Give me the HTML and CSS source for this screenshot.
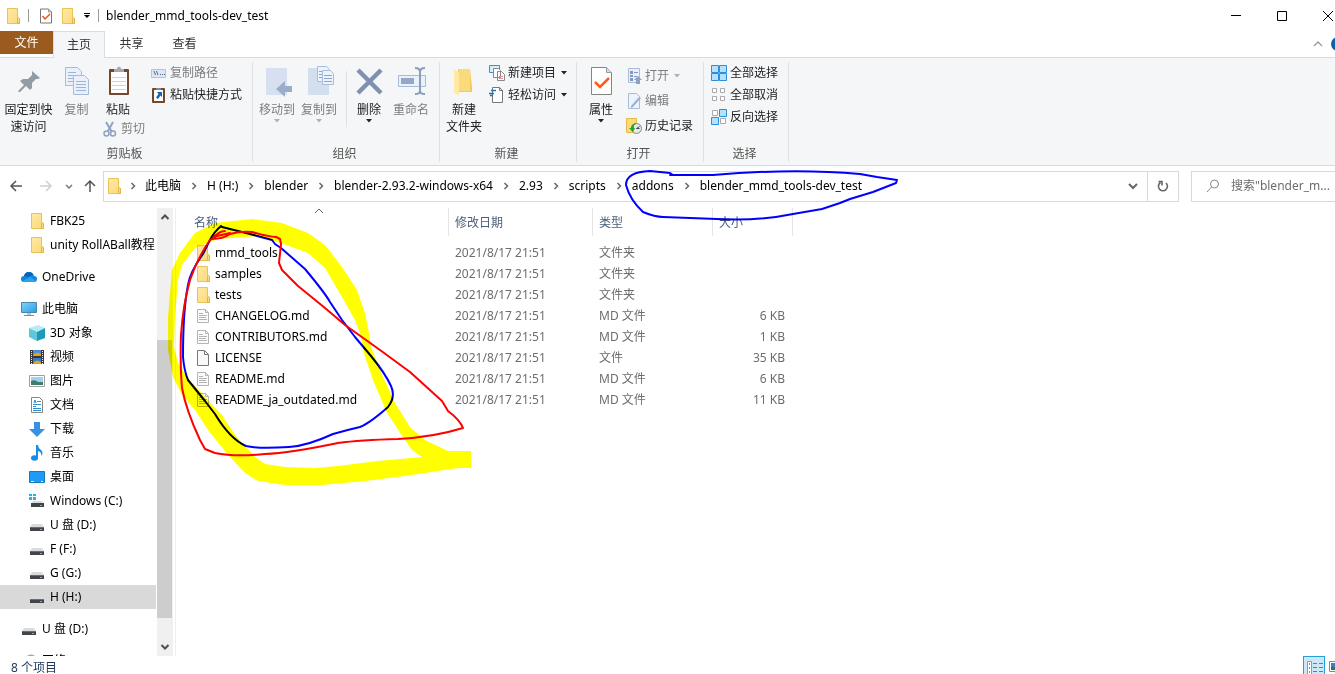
FILE: index.html
```html
<!DOCTYPE html>
<html lang="zh-CN">
<head>
<meta charset="utf-8">
<title>blender_mmd_tools-dev_test</title>
<link rel="stylesheet" href="styles.css">
</head>
<body>
<svg class="defs" aria-hidden="true">
  <defs>
    <linearGradient id="gf" x1="0" y1="0" x2="1" y2="1"><stop offset="0" stop-color="#ffe9a6"/><stop offset="1" stop-color="#fbd978"/></linearGradient>
    <linearGradient id="gs" x1="0" y1="0" x2="1" y2="1"><stop offset="0" stop-color="#7fd4f8"/><stop offset="1" stop-color="#2d9be8"/></linearGradient>
    <symbol id="folder" viewBox="0 0 14 16"><path d="M1.500.5h10v9l2 1v5h-12z" fill="url(#gf)" stroke="#e8c35a"/><path d="M11.500 15.500v-5l1-1 1 1v5z" fill="#fbdc82" stroke="#dfb548"/></symbol>
    <symbol id="mdfile" viewBox="0 0 14 16"><path d="M1.500 1.500h8l3 3v10h-11z" fill="#fbfbfb" stroke="#b4b4b4"/><path d="M9.500 1.500v3h3" fill="none" stroke="#b4b4b4"/><path d="M3 5.500h4M3 7.500h8M3 9.500h7M3 11.500h8" stroke="#b4b4b4"/></symbol>
    <symbol id="blank" viewBox="0 0 14 16"><path d="M1.500.5h7l4 4v11h-11z" fill="#f9f9f9" stroke="#777"/><path d="M8.500.5v4h4" fill="none" stroke="#777"/></symbol>
    <symbol id="drive" viewBox="0 0 16 16"><path d="M3 7h10l2 3H1z" fill="#d9dcde"/><path d="M1 10h14v4H1z" fill="#414549"/><path d="M1 10h14v1H1z" fill="#6a6e72"/><path d="M11 12h2v1h-2z" fill="#3dea45"/></symbol>
    <symbol id="chev" viewBox="0 0 8 8"><path d="M2.500 1l3 3-3 3" fill="none" stroke="#686868" stroke-width="1.500"/></symbol>
    <symbol id="tri" viewBox="0 0 6 4"><path d="M0 0h6L3 3.500z" fill="currentColor"/></symbol>
  </defs>
</svg>
<div class="window">
  <header class="titlebar">
    <svg class="i14"><use href="#folder"/></svg>
    <span class="bar"></span>
    <svg class="i14" viewBox="0 0 14 16"><path d="M1.500 1h8l3 3v11h-11z" fill="#fff" stroke="#777"/><path d="M9.500 1v3h3" fill="none" stroke="#999"/><path d="M3.500 8l2.500 3 5-5" fill="none" stroke="#f0501a" stroke-width="1.500"/></svg>
    <svg class="i14 second"><use href="#folder"/></svg>
    <svg class="qat" viewBox="0 0 8 6"><path d="M1 .5h6" stroke="#000"/><path d="M1 2h6L4 5z"/></svg>
    <span class="bar"></span>
    <h1>blender_mmd_tools-dev_test</h1>
    <div class="wincontrols">
      <button aria-label="最小化"><svg viewBox="0 0 10 10"><path d="M0 4.500h10" stroke="#000"/></svg></button>
      <button aria-label="最大化"><svg viewBox="0 0 10 10"><path d="M.5.5h9v9h-9z" fill="none" stroke="#000"/></svg></button>
      <button aria-label="关闭"><svg viewBox="0 0 10 10"><path d="M0 0l10 10M10 0L0 10" stroke="#000"/></svg></button>
    </div>
  </header>
  <nav class="tabs">
    <button class="file">文件</button><button class="active">主页</button><button>共享</button><button>查看</button>
    <svg class="fold" viewBox="0 0 18 14"><path d="M1 9l4-4 4 4" fill="none" stroke="#999" stroke-width="1.300"/></svg>
    <svg class="help" viewBox="0 0 4 14"><circle cx="7" cy="7" r="7" fill="#0a62ab"/></svg>
  </nav>
  <section class="ribbon">
    <div class="group clip">
      <div class="body">
        <button class="big pin"><svg viewBox="0 0 32 32"><path d="M19 5l8 7-2 1-2 0-4 4 0 5-2 2-4-4-6 6-2 0 1-2 5-5-4-4 3-2 5 0 4-4z" fill="#929ca5"/></svg>固定到快<br>速访问</button>
        <button class="big copy dim"><svg viewBox="0 0 32 32"><g fill="#eaf0fa" stroke="#a9bbd8"><path d="M4.500 1.500h12l4 4v14h-16z"/><path d="M12.500 9.500h11l4 4v15h-15z"/></g><path d="M7 6.500h8M7 9.500h5M7 12.500h5M7 15.500h5M15 15.500h10M15 18.500h10M15 21.500h10M15 24.500h10" stroke="#9cb4d8"/></svg>复制</button>
        <div class="stack">
          <button class="big"><svg viewBox="0 0 32 32"><rect x="7" y="3" width="20" height="26" rx="1" fill="#74492b"/><path d="M9 6h16v21H9z" fill="#fff"/><path d="M10 11.500h14M10 15.500h14M10 19.500h14M10 23.500h14" stroke="#b9dcef"/><path d="M12 6V3h3c0-3 4-3 4 0h3v3z" fill="#a5a9ad"/></svg>粘贴</button>
          <button class="small dim"><svg viewBox="0 0 16 16"><path d="M4 1l6 10M11 1L6 10" stroke="#8ea3c4" stroke-width="2"/><circle cx="4.500" cy="12.500" r="2.500" fill="none" stroke="#8ea3c4" stroke-width="1.500"/><circle cx="11" cy="12.500" r="2.500" fill="none" stroke="#8ea3c4" stroke-width="1.500"/></svg>剪切</button>
        </div>
        <div class="rows">
          <button class="small dim"><svg viewBox="0 0 16 16"><path d="M.5 4.500h14v8H.5z" fill="#dce6f4" stroke="#b5c3da"/><path d="M3 6l1.500 4M5.500 6L7 10M9 9.500h1M11 9.500h1M13 9.500h1" stroke="#56698c"/></svg>复制路径</button>
          <button class="small"><svg viewBox="0 0 16 16"><rect x="1" y="1" width="13" height="15" rx="1" fill="#74492b"/><path d="M3 3h9v11H3z" fill="#fff"/><path d="M5 3V1h5v2z" fill="#888"/><path d="M6 5h5v5L9.500 8.500 7 12 5 10.500 7.500 7z" fill="#1c64b0"/></svg>粘贴快捷方式</button>
        </div>
      </div>
      <div class="caption">剪贴板</div>
    </div>
    <div class="group org">
      <div class="body">
        <button class="big w42 dim"><svg viewBox="0 0 32 32"><path d="M5 2h21v27H5z" fill="#d6e0f0"/><path d="M31 20v6h-7v5l-9-8 9-8v5z" fill="#9cadcb"/></svg>移动到<svg class="drop"><use href="#tri"/></svg></button>
        <button class="big w42 dim"><svg viewBox="0 0 32 32"><path d="M5 2h21v27H5z" fill="#d3deef"/><g fill="#edf3fb" stroke="#aabcd9"><path d="M14.500.5h9l3 3v12h-12z"/><path d="M19.500 4.500h8l3 3v11h-11z"/></g><path d="M16 5.500h3M16 8.500h3M16 11.500h3M21 9.500h8M21 12.500h8M21 15.500h8" stroke="#8ca5cc"/></svg>复制到<svg class="drop"><use href="#tri"/></svg></button>
        <span class="rule"></span>
        <button class="big w42"><svg viewBox="0 0 32 32"><path d="M5 4l23 23M28 4L5 27" stroke="#7f90b0" stroke-width="4.500"/></svg>删除<svg class="drop"><use href="#tri"/></svg></button>
        <button class="big w42 dim"><svg viewBox="0 0 32 32"><path d="M3.500 9.500h27v11h-27z" fill="#e9f1fb" stroke="#a7bbd8"/><path d="M6 12h13v6H6z" fill="#94a7c6"/><path d="M20 2q5 0 5 4v19q0 3-5 3M30 2q-5 0-5 4M30 28q-5 0-5-3" fill="none" stroke="#8a9dbd" stroke-width="2"/></svg>重命名</button>
      </div>
      <div class="caption">组织</div>
    </div>
    <div class="group new">
      <div class="body">
        <button class="big w48"><svg viewBox="0 0 32 32"><path d="M10 3h12l2 18v5H10z" fill="#f4c95c"/><path d="M11 3h11v22H11z" fill="#fadb7b"/><path d="M6 3l5 4v23l-5-4z" fill="#ffe9a3"/></svg>新建<br>文件夹</button>
        <div class="rows">
          <button class="small"><svg viewBox="0 0 16 16"><path d="M.5.500h10v7H.5z" fill="#d7effa" stroke="#3e93b9"/><path d="M4.500 3.500h5l2 2v7h-7zM8.500 6.500h4l3 3v6h-7z" fill="#fff" stroke="#888"/><path d="M10 11.500h4M10 13.500h4" stroke="#d99"/></svg>新建项目<svg class="drop"><use href="#tri"/></svg></button>
          <button class="small"><svg viewBox="0 0 16 16"><path d="M3.500.500h7l3 3v12h-10z" fill="#fff" stroke="#777"/><path d="M10.500.500v3h3" fill="none" stroke="#777"/><path d="M2 3.500h5M0 6.500h5M1 8.500h3" stroke="#1779c2" stroke-width="1.500"/></svg>轻松访问<svg class="drop"><use href="#tri"/></svg></button>
        </div>
      </div>
      <div class="caption">新建</div>
    </div>
    <div class="group open">
      <div class="body">
        <button class="big w48"><svg viewBox="0 0 32 32"><path d="M6.500 1.500h15l5 5v22h-20z" fill="#fff" stroke="#858585"/><path d="M21.500 1.500v5h5" fill="#ddd" stroke="#999"/><path d="M10 16l5 5 9-9" fill="none" stroke="#ff5c14" stroke-width="2.500"/></svg>属性<svg class="drop"><use href="#tri"/></svg></button>
        <div class="rows tall">
          <button class="small dim"><svg viewBox="0 0 16 16"><path d="M2.500.500h11v14h-11z" fill="#e8eff9" stroke="#aabcd8"/><path d="M4 3h3v3H4zM4 7h3v2H4zM4 10h3v3H4z" fill="#8298bf"/><path d="M8 4.500h4M8 8.500h3" stroke="#8298bf"/><path d="M10 16v-4H8l4-4 4 4h-2v4z" fill="#8fa2c6"/></svg>打开<svg class="drop"><use href="#tri"/></svg></button>
          <button class="small dim"><svg viewBox="0 0 16 16"><path d="M2.500.500h8l3 3v12h-11z" fill="#edf3fb" stroke="#aabcd8"/><path d="M15 5l-8 9-2 1 0-2 8-9z" fill="#9cb0d2"/></svg>编辑</button>
          <button class="small"><svg viewBox="0 0 16 16"><path d="M.5.500h10v14H.5z" fill="#fbdc77" stroke="#e3b948"/><circle cx="10.500" cy="10.500" r="5" fill="#e5e7e8" stroke="#858b8e"/><path d="M10.500 10.500l3-2M10.500 10.500h3" fill="none" stroke="#444"/><path d="M10 5q-5 1-5 5H3l4 4 2-4H8q-1-3 2-4z" fill="#20a435"/></svg>历史记录</button>
        </div>
      </div>
      <div class="caption">打开</div>
    </div>
    <div class="group sel">
      <div class="body">
        <div class="rows">
          <button class="small"><svg viewBox="0 0 16 16"><path d="M.5.500h7v7h-7zM8.500.500h7v7h-7zM.5 8.500h7v7h-7zM8.500 8.500h7v7h-7z" fill="#b5e1ff" stroke="#2a8fdc"/></svg>全部选择</button>
          <button class="small"><svg viewBox="0 0 16 16"><path d="M1.500 1.500h4v4h-4zM9.500 1.500h4v4h-4zM1.500 9.500h4v4h-4zM9.500 9.500h4v4h-4z" fill="#fff" stroke="#aaa"/></svg>全部取消</button>
          <button class="small"><svg viewBox="0 0 16 16"><path d="M1.500 1.500h5v5h-5zM9.500 9.500h5v5h-5z" fill="#fff" stroke="#aaa"/><path d="M8.500.500h7v7h-7zM.5 8.500h7v7h-7z" fill="#b5e1ff" stroke="#2a8fdc"/></svg>反向选择</button>
        </div>
      </div>
      <div class="caption">选择</div>
    </div>
  </section>
  <div class="address">
    <div class="navbtns">
      <button aria-label="后退"><svg viewBox="0 0 14 14"><path d="M13 7H2M7 2L2 7l5 5" fill="none" stroke="#555" stroke-width="1.500"/></svg></button>
      <button aria-label="前进"><svg viewBox="0 0 14 14"><path d="M1 7h11M7 2l5 5-5 5" fill="none" stroke="#d0d0d0" stroke-width="1.500"/></svg></button>
      <button class="narrow" aria-label="最近"><svg viewBox="0 0 8 14"><path d="M1 6l3 3 3-3" fill="none" stroke="#777" stroke-width="1.500"/></svg></button>
      <button aria-label="向上"><svg viewBox="0 0 14 14"><path d="M7 13V2M2 7l5-5 5 5" fill="none" stroke="#555" stroke-width="1.500"/></svg></button>
    </div>
    <div class="pathbox">
      <svg class="i14"><use href="#folder"/></svg>
      <svg class="sep"><use href="#chev"/></svg><a href="#">此电脑</a>
      <svg class="sep"><use href="#chev"/></svg><a href="#">H (H:)</a>
      <svg class="sep"><use href="#chev"/></svg><a href="#">blender</a>
      <svg class="sep"><use href="#chev"/></svg><a href="#">blender-2.93.2-windows-x64</a>
      <svg class="sep"><use href="#chev"/></svg><a href="#">2.93</a>
      <svg class="sep"><use href="#chev"/></svg><a href="#">scripts</a>
      <svg class="sep"><use href="#chev"/></svg><a href="#">addons</a>
      <svg class="sep"><use href="#chev"/></svg><a href="#">blender_mmd_tools-dev_test</a>
      <button class="history" aria-label="以前的位置"><svg viewBox="0 0 14 14"><path d="M3 5l4 4 4-4" fill="none" stroke="#666" stroke-width="2"/></svg></button>
      <button class="refresh" aria-label="刷新"><svg viewBox="0 0 14 14"><path d="M10 4a4.500 4.500 0 1 1-5.500-.5M2.500 2.500h3.500v4" fill="none" stroke="#666" stroke-width="1.600"/></svg></button>
    </div>
    <label class="search"><svg viewBox="0 0 14 14"><circle cx="8.500" cy="5" r="4" fill="none" stroke="#888"/><path d="M5.500 8L1 13" stroke="#888"/></svg><input type="text" placeholder='搜索"blender_m...' aria-label="搜索"></label>
  </div>
  <main class="content">
    <nav class="tree">
      <a class="sub" href="#"><svg><use href="#folder"/></svg>FBK25</a>
      <a class="sub" href="#"><svg><use href="#folder"/></svg>unity RollABall教程</a>
      <a class="root" href="#"><svg viewBox="0 0 16 16"><path d="M3 13q-3 0-3-3t3-3q1-4 5-4 4 0 5 4 3 0 3 3t-3 3z" fill="#1386dc"/><path d="M3 7q1-4 5-4 3 0 4 3l-5 2z" fill="#0763b8"/><path d="M2 12l7-4 6 4q-1 1-2 1H3z" fill="#29a5ef"/></svg>OneDrive</a>
      <a class="root" href="#"><svg viewBox="0 0 16 16"><path d="M.5 1.500h15v10H.5z" fill="url(#gs)" stroke="#4789ad"/><path d="M6 12h4v2H6z" fill="#b8c9d2"/><path d="M3 14.500h10" stroke="#78909c"/></svg>此电脑</a>
      <a class="sub" href="#"><svg viewBox="0 0 16 16"><path d="M0 3l9-3 7 3-8 4z" fill="#b4ecf4"/><path d="M0 3l8 4v9l-8-4z" fill="#5fc7da"/><path d="M16 3L8 7v9l8-3z" fill="#1c9cb8"/></svg>3D 对象</a>
      <a class="sub" href="#"><svg viewBox="0 0 16 16"><path d="M1 1h14v14H1z" fill="#38383c"/><path d="M4 1h8v6H4z" fill="#4c8cdb"/><path d="M4 9h8v6H4z" fill="#3e79c5"/><path d="M5 5q3-3 7 0v2H4zM5 13q3-3 7 0v2H4z" fill="#d7a72c"/><path d="M2.500 2v13M13.500 2v13" stroke="#eee" stroke-dasharray="1 1"/></svg>视频</a>
      <a class="sub" href="#"><svg viewBox="0 0 16 16"><path d="M.5 2.500h15v11H.5z" fill="#fff" stroke="#a0a0a0"/><path d="M2 4h12v8H2z" fill="#9ed1f2"/><path d="M2 8q4-2 7 1l5 0v3H2z" fill="#417b70"/></svg>图片</a>
      <a class="sub" href="#"><svg viewBox="0 0 16 16"><path d="M2.500.500h8l3 3v12h-11z" fill="#fff" stroke="#858585"/><path d="M5 6l1-3 1 3M8 4.500h4M4 7.500h8M4 9.500h3M4 11.500h8M4 13.500h8" fill="none" stroke="#2d8cd0"/></svg>文档</a>
      <a class="sub" href="#"><svg viewBox="0 0 16 16"><path d="M5 1h6v7h5l-8 8-8-8h5z" fill="#3a91df"/></svg>下载</a>
      <a class="sub" href="#"><svg viewBox="0 0 16 16"><ellipse cx="5.500" cy="13" rx="3.500" ry="2.800" fill="#168ce4"/><path d="M7 0h2q0 3 3 5 3 3 0 6 1-4-3-5v8H7z" fill="#168ce4"/></svg>音乐</a>
      <a class="sub" href="#"><svg viewBox="0 0 16 16"><path d="M.5 2.500h15v11H.5z" fill="#1e9af7" stroke="#1779bd"/><path d="M2 12.500h3M12 12.500h2" stroke="#d5f0ff"/></svg>桌面</a>
      <a class="sub" href="#"><svg viewBox="0 0 16 16"><path d="M0 1h3v2H0zM4 1h3v2H4zM0 4h3v3H0zM4 4h3v3H4z" fill="#19b6ee"/><path d="M4 8h9l2 3H2z" fill="#d9dcde"/><path d="M2 10h13v4H2z" fill="#414549"/><path d="M11 12h2v1h-2z" fill="#3dea45"/></svg>Windows (C:)</a>
      <a class="sub" href="#"><svg><use href="#drive"/></svg>U 盘 (D:)</a>
      <a class="sub" href="#"><svg><use href="#drive"/></svg>F (F:)</a>
      <a class="sub" href="#"><svg><use href="#drive"/></svg>G (G:)</a>
      <a class="sub current" href="#"><svg><use href="#drive"/></svg>H (H:)</a>
      <a class="root" href="#"><svg><use href="#drive"/></svg>U 盘 (D:)</a>
      <a class="root" href="#"><svg viewBox="0 0 16 16"><circle cx="10" cy="8" r="6.500" fill="#69b9dc"/><path d="M6 5q3-4 7 0l-3 4z" fill="#dff3fb"/></svg>网络</a>
    </nav>
    <div class="scroll" aria-hidden="true">
      <svg viewBox="0 0 16 16"><path d="M4.500 10L8 6.500l3.500 3.500" fill="none" stroke="#505050" stroke-width="2"/></svg>
      <span class="thumb"></span>
      <svg viewBox="0 0 16 16"><path d="M4.500 6L8 9.500 11.500 6" fill="none" stroke="#505050" stroke-width="2"/></svg>
    </div>
    <div class="files">
      <table>
        <colgroup><col class="cname"><col class="cdate"><col class="ctype"><col class="csize"></colgroup>
        <thead><tr><th>名称<svg class="sort" viewBox="0 0 10 6"><path d="M1 5l4-4 4 4" fill="none" stroke="#666"/></svg></th><th>修改日期</th><th>类型</th><th>大小</th></tr></thead>
        <tbody>
          <tr><td><svg><use href="#folder"/></svg>mmd_tools</td><td>2021/8/17 21:51</td><td>文件夹</td><td></td></tr>
          <tr><td><svg><use href="#folder"/></svg>samples</td><td>2021/8/17 21:51</td><td>文件夹</td><td></td></tr>
          <tr><td><svg><use href="#folder"/></svg>tests</td><td>2021/8/17 21:51</td><td>文件夹</td><td></td></tr>
          <tr><td><svg><use href="#mdfile"/></svg>CHANGELOG.md</td><td>2021/8/17 21:51</td><td>MD 文件</td><td>6 KB</td></tr>
          <tr><td><svg><use href="#mdfile"/></svg>CONTRIBUTORS.md</td><td>2021/8/17 21:51</td><td>MD 文件</td><td>1 KB</td></tr>
          <tr><td><svg><use href="#blank"/></svg>LICENSE</td><td>2021/8/17 21:51</td><td>文件</td><td>35 KB</td></tr>
          <tr><td><svg><use href="#mdfile"/></svg>README.md</td><td>2021/8/17 21:51</td><td>MD 文件</td><td>6 KB</td></tr>
          <tr><td><svg><use href="#mdfile"/></svg>README_ja_outdated.md</td><td>2021/8/17 21:51</td><td>MD 文件</td><td>11 KB</td></tr>
        </tbody>
      </table>
    </div>
  </main>
  <footer class="status">
    <span>8 个项目</span>
    <div class="views">
      <button class="on" aria-label="详细信息"><svg viewBox="0 0 20 20"><path d="M3.500 4.500h4v14h-4z" fill="#fff" stroke="#999"/><path d="M5 7h1M5 11h1M5 15h1" stroke="#2473b8" stroke-width="1.500"/><path d="M9 6.500h4M15 6.500h4M9 10.500h4M15 10.500h4M9 14.500h4M15 14.500h4" stroke="#777"/></svg></button>
      <button aria-label="大图标"><svg viewBox="0 0 6 20"><path d="M.5 5.500h10v10H.5z" fill="#fff" stroke="#888"/><path d="M2 7h4v7H2z" fill="#3f7fc4"/><path d="M2 11h4v3H2z" fill="#3d6e56"/></svg></button>
    </div>
  </footer>
</div>
<svg class="ink" viewBox="0 0 920 500" aria-hidden="true">
  <g fill="none" stroke-width="2" stroke-linejoin="round" stroke-linecap="round">
    <path stroke="#00f" d="M673 175L670 173L650 171Q626 172 626 185Q630 200 643 212Q655 217 663 217L717 219Q760 221 793 214L822 209L840 203L850 199L873 192L896 183L897 180L877 177L860 174Q793 168 713 175H670"/>
    <path stroke="#00f" d="M221 226Q214 232 210 240L203 254Q190 272 188 285Q183 310 183 357Q184 370 188 380L205 401L215 414Q230 439 246 446Q258 449 289 447Q307 446 333 434Q347 430 360 427Q370 423 388 407Q396 397 391 386Q385 373 371 356L355 337L342 320L330 302Q325 293 305 269L281 248L275 244L272 240L250 234L222 227"/>
    <path stroke="red" d="M225 231Q219 231 212 239Q223 239 230 234Q240 231 252 232Q269 237 276 237L280 239L281 244L279 263L282 270L298 286L325 308L345 325L380 350L410 372L442 401L448 411Q460 420 463 428Q434 437 398 439Q360 440 338 443Q290 453 265 454Q235 457 215 453L205 449L200 440Q186 410 182 388Q180 365 181 335Q183 305 190 280Q198 257 210 240L217 236L230 233"/>
  </g>
  <path class="marker" fill="#ff0" fill-rule="evenodd" d="M168 350L168 317L172 270L180 253L195 233L215 223L252 219L282 223L308 233L325 245L342 267L357 290L365 313L369 333L371 347L383 377L395 403L410 427L425 440L448 451H471V468H458L405 476L365 481L322 485H285L258 481L245 473L228 455L208 430L195 410L182 395L173 377ZM175 317L178 280L182 265L195 248L218 239L258 236L278 242L308 253L325 268L342 297L355 320L360 333L365 357L373 380L387 413L403 437L412 450L422 457L378 461L338 466L315 468L285 467L265 464L255 457L235 435L222 415L205 397L188 378L178 363L174 347Z"/>
</svg>
</body>
</html>
```
FILE: styles.css
```css
* { box-sizing: border-box; }
body {
  margin: 0;
  background: #fff;
  color: #000;
  font: 12px/16px "Noto Sans", "Noto Sans CJK SC", sans-serif;
  overflow: hidden;
}
button, input { font: inherit; color: inherit; border: 0; background: none; padding: 0; margin: 0; }
a { color: inherit; text-decoration: none; }
svg { display: block; flex: none; }
.defs { position: absolute; width: 0; height: 0; }
.i14 { width: 14px; height: 16px; }
.window { position: relative; height: 100vh; display: flex; flex-direction: column; }

.titlebar { display: flex; align-items: center; height: 31px; padding-left: 6px; flex: none; }
.bar { width: 1px; height: 13px; background: #999; margin: 0 10px 0 8px; }
.titlebar .second { margin-left: 8px; }
.qat { width: 8px; height: 6px; margin-left: 8px; }
.titlebar h1 { font-size: 12px; font-weight: 400; margin: 0; }
.qat + .bar { margin: 0 7px; }
.wincontrols { display: flex; margin-left: auto; }
.wincontrols button { width: 46px; height: 30px; display: flex; align-items: center; justify-content: flex-end; padding-right: 2px; }
.wincontrols svg { width: 10px; height: 10px; }

.tabs { display: flex; align-items: flex-start; height: 27px; flex: none; border-bottom: 1px solid #dadbdc; }
.tabs button { width: 53px; height: 26px; color: #333; }
.tabs .file { height: 23px; background: #9b5a1e; color: #fff; }
.tabs .active { width: 52px; height: 27px; background: #f5f6f7; border: 1px solid #dadbdc; border-bottom: 0; }
.fold { width: 18px; height: 14px; margin: 6px 0 0 auto; }
.help { width: 4px; height: 14px; margin-top: 6px; }

.ribbon { display: flex; flex: none; height: 108px; padding: 4px 0 3px; background: #f5f6f7; border-bottom: 1px solid #dadbdc; color: #222; }
.group { display: flex; flex-direction: column; border-right: 1px solid #e0e1e2; }
.body { display: flex; flex: 1; }
.caption { text-align: center; padding-right: 3px; color: #555; }
.clip { width: 253px; }
.org { width: 187px; }
.new { width: 137px; }
.open { width: 127px; }
.sel { width: 85px; }
.big { display: flex; flex-direction: column; align-items: center; justify-content: flex-start; align-self: flex-start; padding-top: 4px; line-height: 17px; text-align: center; white-space: nowrap; }
.big > svg:first-child { width: 32px; height: 32px; margin-bottom: 3px; }
.big .drop { margin-top: 1px; }
.drop { width: 6px; height: 4px; }
.dim { color: #7d7d7d; }
.dim .drop { color: #b0b0b0; }
.pin { width: 57px; }
.copy { width: 39px; }
.stack { display: flex; flex-direction: column; width: 52px; }
.stack .big { padding-left: 6px; }
.stack .small { align-self: flex-start; padding-left: 6px; }
.w42 { width: 42px; }
.w48 { width: 48px; }
.org .body { padding-left: 3px; }
.rule { width: 1px; height: 56px; margin: 9px 1px 0 6px; background: #e0e1e2; }
.rows { display: flex; flex-direction: column; }
.small { display: flex; align-items: center; gap: 3px; height: 22px; white-space: nowrap; }
.small > svg:first-child { width: 16px; height: 16px; }
.small .drop { margin-left: 2px; }
.clip .rows { padding-left: 3px; }
.new .rows { padding-left: 1px; }
.tall { padding: 3px 0 0 1px; gap: 3px; }
.sel .rows { padding-left: 7px; }

.address { display: flex; align-items: center; flex: none; height: 42px; padding-bottom: 2px; }
.navbtns { display: flex; width: 103px; padding-left: 9px; align-items: center; }
.navbtns button { display: flex; width: 30px; }
.navbtns svg { width: 14px; height: 14px; }
.navbtns button:first-child { justify-content: flex-start; }
.navbtns .narrow { width: 8px; margin: 0 10px 0 -4px; }
.navbtns .narrow svg { width: 8px; }
.navbtns button:last-child { width: 14px; }
.pathbox { display: flex; align-items: center; flex: 1; height: 31px; border: 1px solid #d9d9d9; padding-left: 3px; }
.sep { width: 8px; height: 8px; margin: 0 9px; }
.pathbox .i14 + .sep { margin: 0 8px; }
.history { margin-left: auto; width: 28px; }
.refresh { width: 31px; height: 29px; border-left: 1px solid #d9d9d9; }
.history svg, .refresh svg { width: 14px; height: 14px; margin: 0 auto; }
.search { display: flex; align-items: center; width: 144px; height: 31px; margin-left: 12px; padding-left: 14px; border: 1px solid #d9d9d9; border-right: 0; }
.search svg { width: 14px; height: 14px; }
.search input { width: 114px; padding-left: 11px; outline: 0; }
.search input::placeholder { color: #6d6d6d; opacity: 1; }

.content { display: flex; flex: 1; min-height: 0; }
.tree { width: 156px; padding-top: 1px; overflow: hidden; flex: none; }
.tree a { display: flex; align-items: center; gap: 5px; height: 24px; padding-left: 29px; white-space: nowrap; }
.tree svg { width: 16px; height: 16px; }
.tree .root { padding-left: 21px; margin-top: 8px; }
.tree .current { background: #d9d9d9; }
.scroll { display: flex; flex-direction: column; width: 16px; margin-left: 1px; background: #f0f0f0; align-items: center; justify-content: space-between; flex: none; }
.scroll svg { width: 16px; height: 18px; }
.thumb { width: 15px; height: 62%; margin-top: auto; margin-bottom: 20px; background: #cdcdcd; align-self: flex-start; }
.files { flex: 1; margin-left: 2px; border-left: 1px solid #f0f0f0; }
table { table-layout: fixed; border-collapse: separate; border-spacing: 0; width: 617px; }
.cname { width: 273px; }
.cdate { width: 144px; }
.ctype { width: 120px; }
.csize { width: 80px; }
th { position: relative; height: 28px; padding: 2px 0 0 6px; text-align: left; font-weight: 400; color: #4c607a; border-right: 1px solid #e5e5e5; }
th:first-child { padding-left: 18px; }
.sort { position: absolute; left: 138px; top: 0; width: 10px; height: 6px; }
tbody::before { content: ""; display: block; height: 6px; }
td { height: 21px; padding: 0 0 0 6px; color: #6d6d6d; white-space: nowrap; }
td:first-child { display: flex; align-items: center; gap: 5px; padding-left: 20px; color: #000; }
td:last-child { text-align: right; padding-right: 8px; }
td svg { width: 14px; height: 16px; }

.status { display: flex; align-items: center; justify-content: space-between; height: 18px; flex: none; padding-left: 11px; color: #1e395b; }
.status span { padding-top: 5px; }
.views { display: flex; height: 18px; gap: 4px; overflow: hidden; }
.views svg { height: 20px; width: 20px; }
.views button:last-child svg { width: 6px; }
.views .on { background: #cce8f6; border: 1px solid #26a0da; height: 22px; }
.ink { position: absolute; left: 0; top: 0; width: 920px; height: 500px; pointer-events: none; mix-blend-mode: multiply; }
.marker { mix-blend-mode: multiply; }
```
